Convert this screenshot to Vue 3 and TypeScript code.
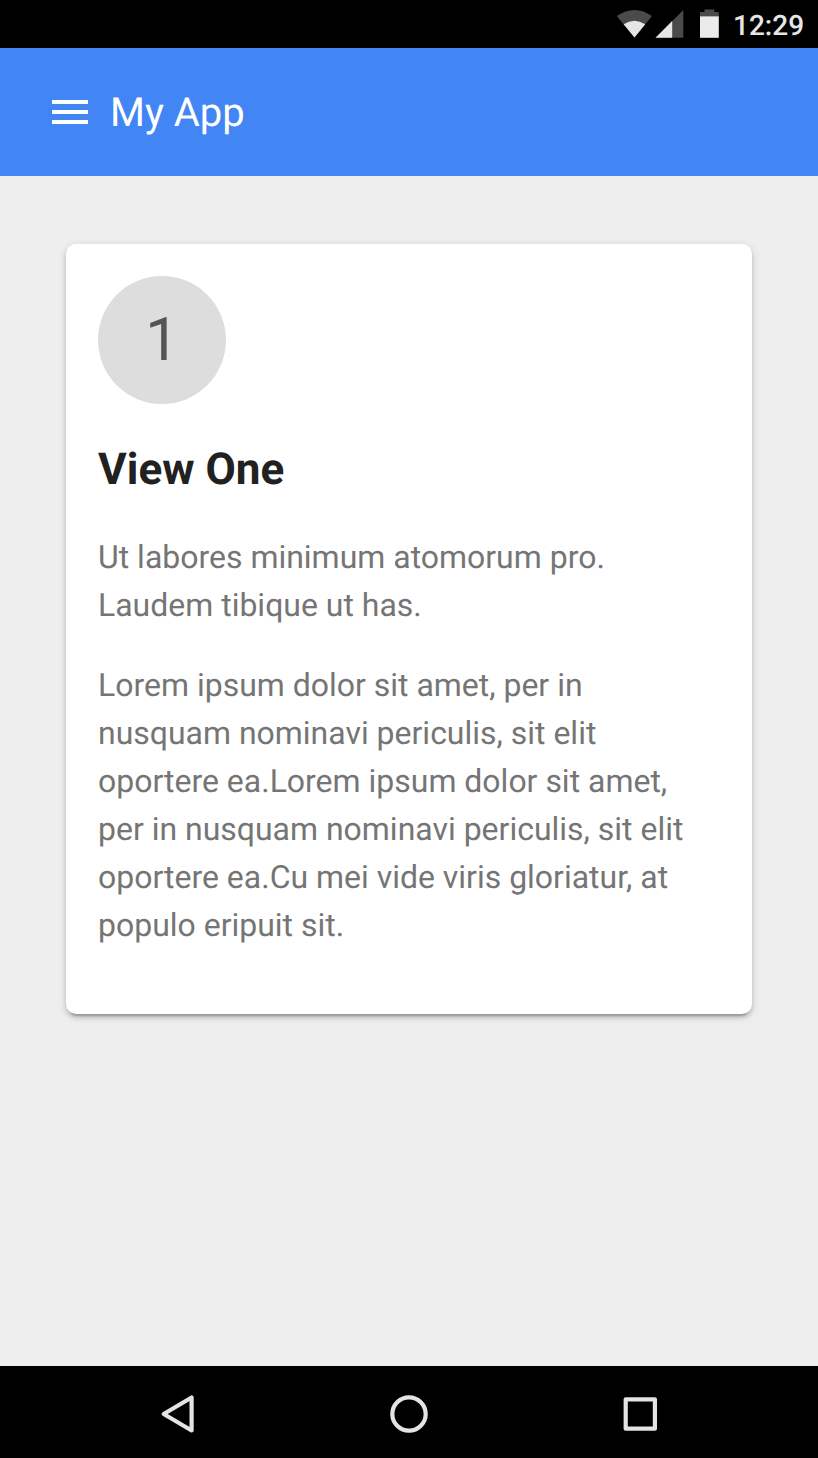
<script setup lang="ts">
const badge: string = '1'
const title: string = 'View One'
const paragraphs: string[][] = [
  ['Ut labores minimum atomorum pro.', 'Laudem tibique ut has.'],
  [
    'Lorem ipsum dolor sit amet, per in',
    'nusquam nominavi periculis, sit elit',
    'oportere ea.Lorem ipsum dolor sit amet,',
    'per in nusquam nominavi periculis, sit elit',
    'oportere ea.Cu mei vide viris gloriatur, at',
    'populo eripuit sit.',
  ],
]
</script>

<template>
  <div class="screen">
    <div class="status">
      <svg class="status-icons" width="110" height="48" viewBox="612 0 110 48">
        <path d="M634.500 37.500 L616.800 16 Q634.500 4 652 16 Z" fill="#4a4a4a" />
        <path d="M634.500 37.500 L623.600 24.300 Q634.500 17 645.200 24.300 Z" fill="#e6e6e6" />
        <path d="M655.500 37.800 L683.300 10 V37.800 Z" fill="#4a4a4a" />
        <path d="M655.500 37.800 L672.200 21.100 V37.800 Z" fill="#e6e6e6" />
        <path d="M700 16.500 V12 H704.500 V9.500 H714.300 V12 H718.800 V16.500 Z" fill="#4a4a4a" />
        <path d="M700 16.300 H718.800 V37.800 H700 Z" fill="#ebebeb" />
      </svg>
      <span class="clock">12:29</span>
    </div>
    <header class="toolbar">
      <svg class="menu" width="36" height="24" viewBox="0 0 36 24">
        <path d="M0 0H36V4H0ZM0 10H36V14H0ZM0 20H36V24H0Z" fill="#fff" />
      </svg>
      <span class="app-title">My App</span>
    </header>
    <main class="content">
      <section class="card">
        <div class="badge">{{ badge }}</div>
        <h1>{{ title }}</h1>
        <p v-for="(lines, i) in paragraphs" :key="i">
          <span v-for="line in lines" :key="line" class="line">{{ line }}</span>
        </p>
      </section>
    </main>
    <nav class="navbar">
      <svg width="818" height="92" viewBox="0 1366 818 92" fill="none" stroke="#e4e4e4" stroke-width="4.200" stroke-linejoin="round">
        <path d="M191.600 1397.500 V1430.500 L163.700 1414 Z" />
        <circle cx="409" cy="1414" r="16.700" />
        <rect x="625.700" y="1399.300" width="29.200" height="29.400" />
      </svg>
    </nav>
  </div>
</template>

<style>
body {
  margin: 0;
}
</style>

<style scoped>
.screen {
  width: 818px;
  height: 1458px;
  display: flex;
  flex-direction: column;
  background: #eee;
  font-family: Roboto, sans-serif;
  text-rendering: geometricPrecision;
  overflow: hidden;
}
.status {
  height: 48px;
  flex: none;
  box-sizing: border-box;
  padding-right: 14px;
  display: flex;
  justify-content: flex-end;
  background: #000;
}
.status-icons {
  margin-right: 11px;
}
.clock {
  width: 71px;
  font-size: 28px;
  font-weight: 500;
  line-height: 52px;
  color: #e6e6e6;
  white-space: nowrap;
}
.toolbar {
  height: 128px;
  flex: none;
  box-sizing: border-box;
  padding-left: 52px;
  display: flex;
  align-items: center;
  gap: 22px;
  background: #4285f4;
}
.app-title {
  padding-top: 2px;
  font-size: 40px;
  line-height: 48px;
  color: #fff;
}
.content {
  flex: 1;
  padding: 68px 66px 0;
}
.card {
  height: 770px;
  box-sizing: border-box;
  padding: 32px;
  background: #fff;
  border-radius: 10px;
  box-shadow:
    0 4px 4px rgba(0, 0, 0, 0.14),
    0 2px 10px rgba(0, 0, 0, 0.12),
    0 6px 2px -4px rgba(0, 0, 0, 0.2);
}
.badge {
  width: 128px;
  height: 128px;
  border-radius: 50%;
  background: #ddd;
  color: #555;
  font-size: 60px;
  line-height: 128px;
  text-align: center;
}
h1 {
  margin: 40px 0 39px;
  font-size: 44px;
  line-height: 50px;
  font-weight: 700;
  color: #212121;
}
p {
  margin: 0 0 32px;
  font-size: 31.970px;
  line-height: 48px;
  color: #757575;
}
.line {
  display: block;
  white-space: nowrap;
}
.navbar {
  height: 92px;
  flex: none;
  background: #000;
}
</style>
